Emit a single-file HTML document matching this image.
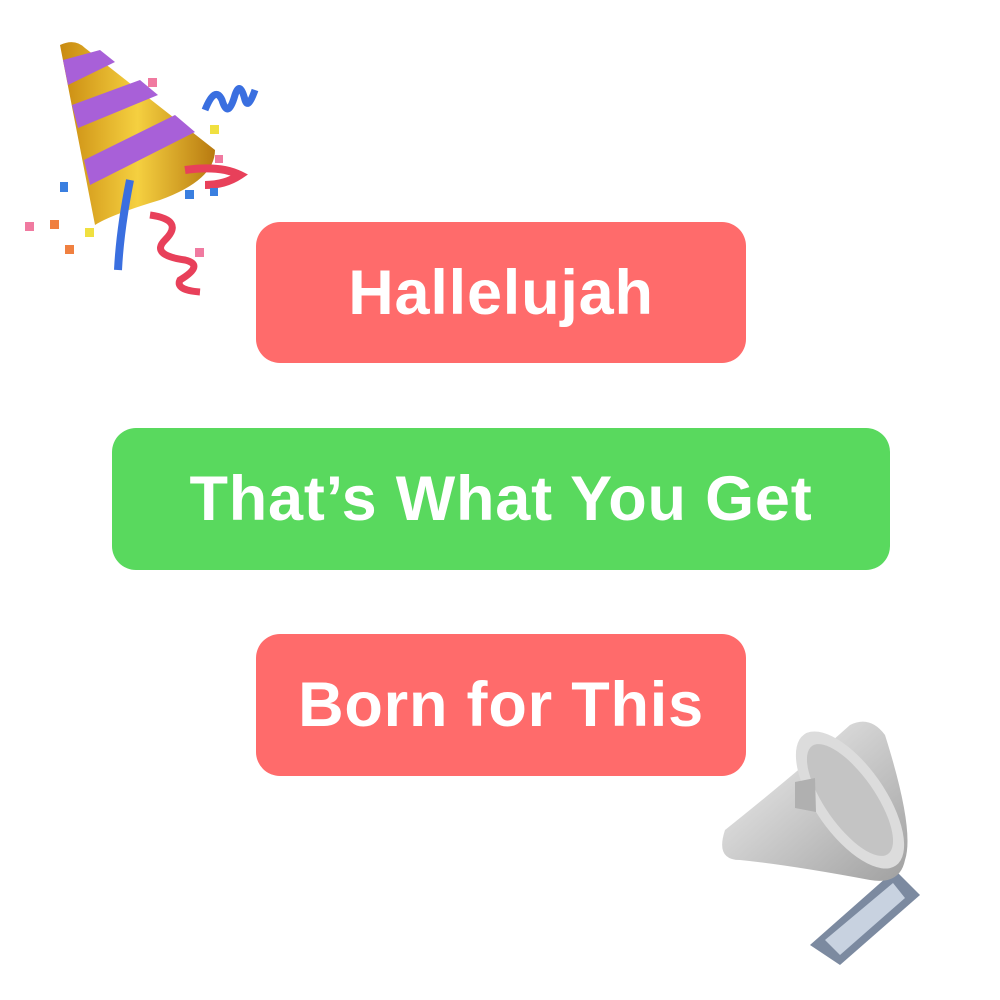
<!DOCTYPE html>
<html><head><style>
body{margin:0;width:1000px;height:1000px;background:#fff;position:relative;overflow:hidden;font-family:"Liberation Sans",sans-serif}
.b{position:absolute;border-radius:24px;color:#fff;font-weight:bold;font-size:63px;display:flex;align-items:center;justify-content:center;letter-spacing:0.8px}
.r{background:#FF6B6B}.g{background:#59D95E}
</style></head><body>
<div class="b r" style="left:256px;top:222px;width:490px;height:141px">Hallelujah</div>
<div class="b g" style="left:112px;top:428px;width:778px;height:142px">That’s What You Get</div>
<div class="b r" style="left:256px;top:634px;width:490px;height:142px">Born for This</div>
<svg style="position:absolute;left:0;top:0" width="300" height="310">
<defs><linearGradient id="gold" x1="0" y1="0" x2="1" y2="0"><stop offset="0" stop-color="#c98a10"/><stop offset=".5" stop-color="#f5d040"/><stop offset="1" stop-color="#b87a10"/></linearGradient></defs>
<path d="M60 45 Q75 38 85 48 L215 150 Q215 180 160 200 Q110 215 95 225 Z" fill="url(#gold)"/>
<path d="M63 60 L100 50 L115 62 L68 85 Z M72 105 L140 80 L158 95 L78 128 Z M84 160 L175 115 L195 132 L90 185 Z" fill="#a860d8"/>
<path d="M205 110 Q215 85 222 100 Q228 120 235 95 Q240 80 245 100 Q248 110 255 90" stroke="#3a6fe0" stroke-width="7" fill="none"/>
<path d="M185 170 Q220 165 240 175 Q225 185 205 185" stroke="#e8405a" stroke-width="8" fill="none"/>
<path d="M130 180 Q120 230 118 270" stroke="#3a6fe0" stroke-width="8" fill="none"/>
<path d="M150 215 Q185 220 165 240 Q150 255 185 260 Q205 265 180 280 Q175 290 200 292" stroke="#e8405a" stroke-width="7" fill="none"/>
<g fill="#f08040"><rect x="50" y="220" width="9" height="9"/><rect x="65" y="245" width="9" height="9"/></g>
<g fill="#3a7fe0"><rect x="60" y="182" width="8" height="10"/><rect x="185" y="190" width="9" height="9"/><rect x="210" y="188" width="8" height="8"/></g>
<g fill="#f07aa0"><rect x="25" y="222" width="9" height="9"/><rect x="148" y="78" width="9" height="9"/><rect x="215" y="155" width="8" height="8"/><rect x="195" y="248" width="9" height="9"/></g>
<g fill="#f0e040"><rect x="85" y="228" width="9" height="9"/><rect x="210" y="125" width="9" height="9"/></g>
</svg>
<svg style="position:absolute;left:700px;top:700px" width="300" height="300">
<defs><linearGradient id="sil" x1="0" y1="0" x2="1" y2="1"><stop offset="0" stop-color="#f4f4f4"/><stop offset="1" stop-color="#a0a0a0"/></linearGradient></defs>
<path d="M110 245 L195 170 L220 195 L140 265 Z" fill="#7c8aa0"/>
<path d="M125 240 L193 183 L205 198 L140 255 Z" fill="#c8d2e0"/>
<path d="M25 130 Q15 160 40 160 Q90 165 170 180 Q200 185 205 160 Q215 130 185 35 Q170 15 150 25 Q100 70 25 130 Z" fill="url(#sil)"/>
<ellipse cx="150" cy="100" rx="35" ry="80" transform="rotate(-35 150 100)" fill="#dcdcdc"/>
<ellipse cx="150" cy="100" rx="25" ry="66" transform="rotate(-35 150 100)" fill="#c4c4c4"/>
<path d="M95 82 L115 78 L116 112 L95 108 Z" fill="#b0b0b0"/>
</svg>
</body></html>
